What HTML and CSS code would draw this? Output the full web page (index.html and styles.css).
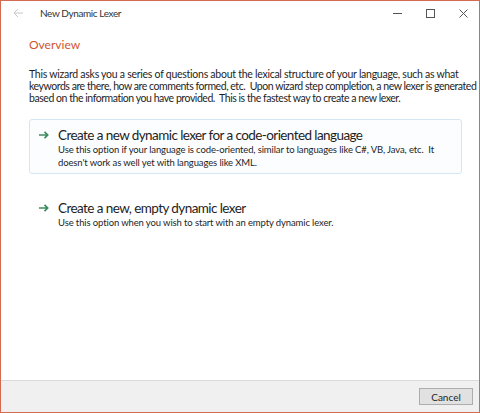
FILE: index.html
```html
<!DOCTYPE html>
<html>
<head>
<meta charset="utf-8">
<link rel="stylesheet" href="styles.css">
</head>
<body>
<div class="window">
  <div class="titlebar">
    <svg class="back" width="10" height="10" viewBox="0 0 10 10"><path d="M10 5H1M5 1L1 5l4 4" fill="none" stroke="#c8c8c8" stroke-width="1"/></svg>
    <span class="title">New Dynamic Lexer</span>
    <div class="controls">
      <svg width="9" height="9" viewBox="0 0 9 9"><path d="M0 4.5h9" stroke="#555" stroke-width="1"/></svg>
      <svg width="9" height="9" viewBox="0 0 9 9"><rect x="0.5" y="0.5" width="8" height="8" fill="none" stroke="#555" stroke-width="1"/></svg>
      <svg width="9" height="9" viewBox="0 0 9 9"><path d="M0.5 0.5l8 8M8.5 0.5l-8 8" stroke="#555" stroke-width="1"/></svg>
    </div>
  </div>
  <div class="content">
    <h1 class="heading">Overview</h1>
    <p class="intro">This wizard asks you a series of questions about the lexical structure of your language, such as what<br><span class="tight">keywords are there, how are comments formed, etc.&nbsp; Upon wizard step completion, a new lexer is generated</span><br><span class="tight">based on the information you have provided.&nbsp; This is the fastest way to create a new lexer.</span></p>
    <div class="option selected">
      <svg class="arrow" width="10" height="8" viewBox="0 0 10 8"><path d="M0 4h8.5M5.5 0.8L8.7 4 5.5 7.2" fill="none" stroke="#3d8b5f" stroke-width="1.7"/></svg>
      <div class="option-text">
        <div class="option-title">Create a new dynamic lexer for a code-oriented language</div>
        <div class="option-desc">Use this option if your language is code-oriented, similar to languages like C#, VB, Java, etc.&nbsp; It<br>doesn't work as well yet with languages like XML.</div>
      </div>
    </div>
    <div class="option">
      <svg class="arrow" width="10" height="8" viewBox="0 0 10 8"><path d="M0 4h8.5M5.5 0.8L8.7 4 5.5 7.2" fill="none" stroke="#3d8b5f" stroke-width="1.7"/></svg>
      <div class="option-text">
        <div class="option-title">Create a new, empty dynamic lexer</div>
        <div class="option-desc">Use this option when you wish to start with an empty dynamic lexer.</div>
      </div>
    </div>
  </div>
  <div class="footer">
    <button class="cancel">Cancel</button>
  </div>
</div>
</body>
</html>
```
FILE: styles.css
```css
html, body { margin: 0; padding: 0; }
body { font-family: Lato, "Open Sans", sans-serif; color: #1e1e1e; background: #fff; }
.window {
  width: 480px; height: 413px; box-sizing: border-box;
  border: 1px solid #d26b52; display: flex; flex-direction: column; background: #fff;
}
.titlebar { height: 29px; display: flex; align-items: center; padding-bottom: 5px; box-sizing: border-box; }
.back { margin-left: 12px; }
.title { font-size: 10px; letter-spacing: -0.4px; color: #333; margin-left: 17px; line-height: 14px; }
.controls { margin-left: auto; display: flex; gap: 24px; margin-right: 11px; }
.controls svg { display: block; }
.content { flex: 1; padding: 7px 16px 0 28px; }
.heading { font-weight: normal; font-size: 12px; color: #d0552f; margin: 0 0 15px 0; line-height: 16px; }
.intro { font-size: 10.5px; letter-spacing: -0.26px; line-height: 12px; margin: 0 0 15px 0; white-space: nowrap; }
.intro .tight { letter-spacing: -0.45px; }
.option { display: flex; align-items: flex-start; width: 433px; box-sizing: border-box; padding: 7px 8px 4px 8px; border: 1px solid transparent; border-radius: 3px; margin-bottom: 18px; }
.option.selected { border-color: #d5e6f2; background: #fcfdff; }
.arrow { margin: 4px 9px 0 1px; flex: none; }
.option-title { font-size: 13.5px; letter-spacing: -0.58px; line-height: 16px; color: #1e1e1e; }
.option-desc { font-size: 9.5px; letter-spacing: -0.12px; line-height: 13px; white-space: nowrap; }
.footer { height: 31px; background: #f0f0f0; border-top: 1px solid #dcdcdc; display: flex; align-items: center; justify-content: flex-end; padding-right: 6px; }
.cancel { width: 54px; height: 17px; font-family: inherit; font-size: 10px; background: #e1e1e1; border: 1px solid #adadad; padding: 0; color: #1e1e1e; }
```
